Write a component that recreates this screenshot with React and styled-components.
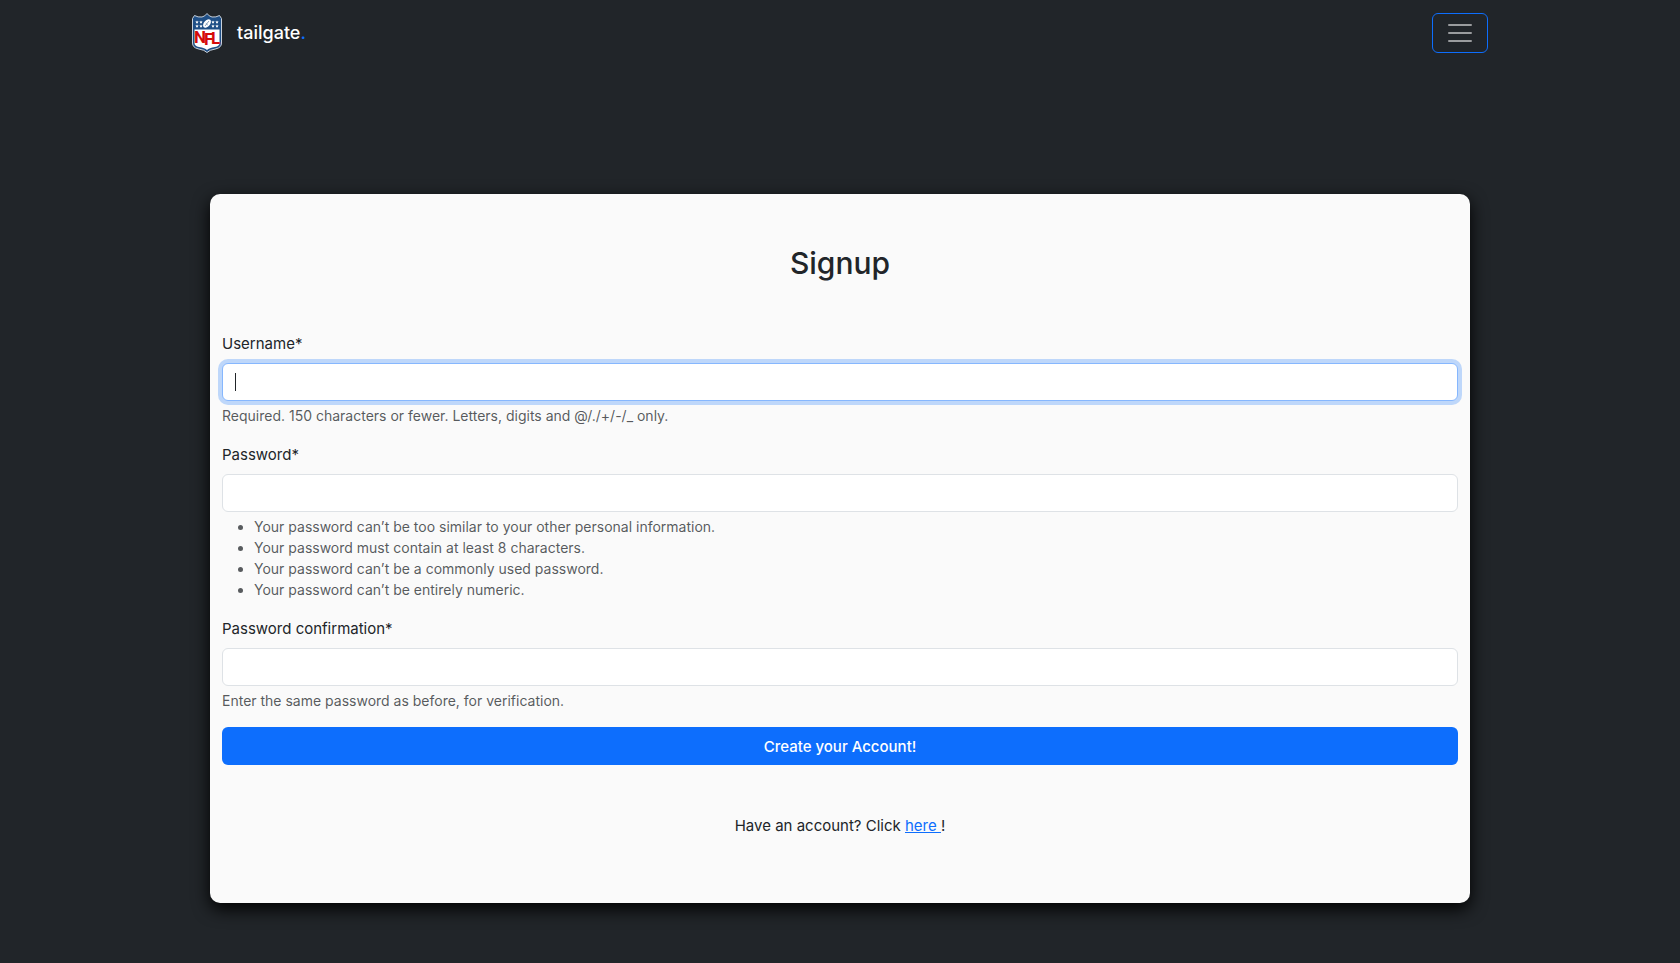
import React from "react";
import styled, { createGlobalStyle } from "styled-components";

const GlobalStyle = createGlobalStyle`
  *, *::before, *::after { box-sizing: border-box; }
  body {
    margin: 0;
    background: #212529;
    color: #212529;
    font-family: Inter, "Liberation Sans", sans-serif;
    font-size: 15px;
    line-height: 25px;
  }
`;

const Navbar = styled.nav`
  display: flex;
  align-items: center;
  justify-content: space-between;
  max-width: 1320px;
  margin: 0 auto;
  padding: 13px 12px;
`;

const Brand = styled.a`
  display: flex;
  align-items: center;
  gap: 15px;
  color: #fff;
  font-size: 18px;
  font-weight: 500;
  line-height: 30px;
  text-decoration: none;
`;

const BrandDot = styled.span`
  color: #0d6efd;
`;

const Toggler = styled.button`
  display: flex;
  padding: 4px 12px;
  border: 1px solid #0d6efd;
  border-radius: 6px;
  background: transparent;
  color: rgba(255, 255, 255, 0.55);
`;

const Card = styled.main`
  width: 75%;
  margin: 128px auto 60px;
  padding: 50px 12px;
  border-radius: 10px;
  background: #fafafa;
  box-shadow: 0 6px 17px #000;
`;

const Title = styled.h1`
  margin: 0 0 48px;
  font-size: 30px;
  font-weight: 500;
  line-height: 39px;
  text-align: center;
`;

const Form = styled.form`
  display: flex;
  flex-direction: column;
  gap: 16px;
`;

const Field = styled.div`
  display: flex;
  flex-direction: column;
`;

const Label = styled.label`
  margin-bottom: 7px;
`;

const InputWrap = styled.div`
  position: relative;
  display: flex;
`;

const Input = styled.input`
  width: 100%;
  height: 38px;
  padding: 6px 12px;
  border: 1px solid ${(p) => (p.$active ? "#86b7fe" : "#dee2e6")};
  border-radius: 6px;
  outline: 0;
  background: #fff;
  color: #212529;
  font: inherit;
  caret-color: transparent;
  box-shadow: ${(p) => (p.$active ? "0 0 0 4px rgba(13, 110, 253, 0.25)" : "none")};
`;

const Caret = styled.span`
  position: absolute;
  top: 10px;
  left: 13px;
  width: 1px;
  height: 18px;
  background: #212529;
  pointer-events: none;
`;

const Help = styled.div`
  margin-top: 4px;
  color: rgba(33, 37, 41, 0.75);
  font-size: 14px;
  line-height: 21px;
`;

const Rules = styled.ul`
  margin: 0;
  padding-left: 32px;
`;

const Submit = styled.button`
  height: 38px;
  padding: 6px 12px;
  border: 0;
  border-radius: 6px;
  background: #0d6efd;
  color: #fff;
  font: inherit;
  font-weight: 500;
`;

const Footnote = styled.p`
  margin: 48px 0 15px;
  text-align: center;
`;

const Link = styled.a`
  color: #0d6efd;
  text-decoration: underline;
  white-space: pre;
`;

const LogoText = styled.text`
  font-family: Roboto, "Liberation Sans", sans-serif;
  font-size: 17px;
  font-weight: 700;
  fill: #d50a0a;
`;

const STARS = [[5, 9], [9, 9], [5, 13], [9, 13], [21, 9], [25, 9], [21, 13], [25, 13]];

function ShieldLogo() {
  return (
    <svg width="30" height="40" viewBox="0 0 30 40" aria-hidden="true">
      <path
        d="M15 .5 Q17 3.4 20 4 Q24 4.5 27.5 2.5 L29.5 5.5 V30 Q29.5 34.5 24 35.8 Q17 37 15 39.5 Q13 37 6 35.8 Q.5 34.5 .5 30 V5.5 L2.5 2.5 Q6 4.5 10 4 Q13 3.4 15 .5Z"
        fill="#1f4f86"
        stroke="#c9d2dc"
        strokeWidth="1"
      />
      <path
        d="M2.5 16.5 H27.5 V30 Q27.5 33 23 34 Q17 35 15 37 Q13 35 7 34 Q2.5 33 2.5 30Z"
        fill="#fff"
      />
      {STARS.map(([x, y]) => (
        <path key={`${x}-${y}`} d={`M${x} ${y - 1.5} l.5 1 1.1 .1 -.8 .8 .2 1.1 -1 -.5 -1 .5 .2 -1.1 -.8 -.8 1.1 -.1Z`} fill="#fff" />
      ))}
      <ellipse cx="15" cy="10.5" rx="5" ry="3" transform="rotate(-50 15 10.5)" fill="#fff" />
      <path d="M13 13 L17 8 M13.8 10.4 L15.8 12" stroke="#56799d" strokeWidth=".7" fill="none" />
      <LogoText x="2 12 19" y="30 32 31">NFL</LogoText>
    </svg>
  );
}

function MenuIcon() {
  return (
    <svg width="30" height="30" viewBox="0 0 30 30" fill="none" aria-hidden="true">
      <path d="M4 7h22M4 15h22M4 23h22" stroke="currentColor" strokeWidth="2" strokeLinecap="round" />
    </svg>
  );
}

function FormField({ id, label, type, active, children }) {
  return (
    <Field>
      <Label htmlFor={id}>{label}*</Label>
      <InputWrap>
        <Input id={id} name={id} type={type} aria-describedby={`${id}-help`} $active={active} required />
        {active && <Caret aria-hidden="true" />}
      </InputWrap>
      <Help id={`${id}-help`}>{children}</Help>
    </Field>
  );
}

export default function App() {
  return (
    <>
      <GlobalStyle />
      <Navbar>
        <Brand href="#">
          <ShieldLogo />
          <span>tailgate<BrandDot>.</BrandDot></span>
        </Brand>
        <Toggler type="button" aria-label="Toggle navigation">
          <MenuIcon />
        </Toggler>
      </Navbar>
      <Card>
        <Title>Signup</Title>
        <Form>
          <FormField id="username" label="Username" type="text" active>
            Required. 150 characters or fewer. Letters, digits and @/./+/-/_ only.
          </FormField>
          <FormField id="password1" label="Password" type="password">
            <Rules>
              <li>Your password can’t be too similar to your other personal information.</li>
              <li>Your password must contain at least 8 characters.</li>
              <li>Your password can’t be a commonly used password.</li>
              <li>Your password can’t be entirely numeric.</li>
            </Rules>
          </FormField>
          <FormField id="password2" label="Password confirmation" type="password">
            Enter the same password as before, for verification.
          </FormField>
          <Submit type="submit">Create your Account!</Submit>
        </Form>
        <Footnote>
          Have an account? Click <Link href="#login">{"here "}</Link>!
        </Footnote>
      </Card>
    </>
  );
}
